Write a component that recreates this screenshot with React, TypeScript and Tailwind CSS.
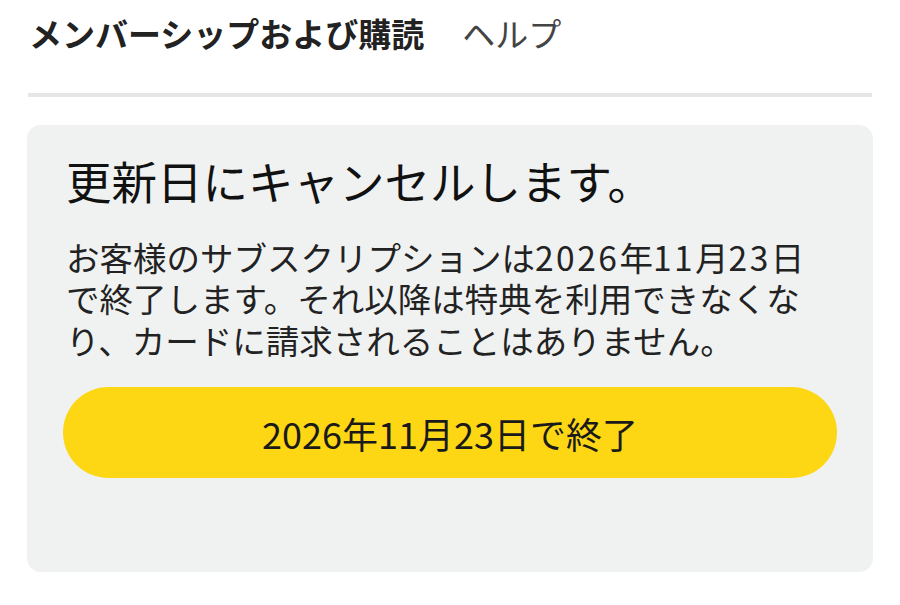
export default function App() {
  const jp = { fontFamily: '"Noto Sans CJK JP", "Noto Sans", sans-serif' };

  return (
    <div className="min-h-screen w-[900px] bg-white px-[27px]" style={jp}>
      {/* tabs */}
      <div className="flex h-[47px] mt-[10px] items-center px-[2px]">
        <span className="text-[33px] font-bold text-[#222222] leading-none">メンバーシップおよび購読</span>
        <span className="ml-[38px] text-[33px] text-[#444444] leading-none">ヘルプ</span>
      </div>
      <div className="mt-[36px] mx-[1px] h-[4px] bg-[#e6e6e6]" />

      {/* cancel card */}
      <div className="mt-[28px] rounded-[14px] bg-[#f0f1f1] px-[36px] pt-[28px] pb-[94px]">
        <h1 className="pl-[3px] text-[45.5px] leading-[1.2] font-normal text-[#111111]">
          更新日にキャンセルします。
        </h1>
        <p className="mt-[28px] pl-[3px] text-[33.5px] leading-[41.5px] text-[#222222]">
          お客様のサブスクリプションは<span className="tracking-[2.5px]">2026</span>年
          <span className="tracking-[2.5px]">11</span>月<span className="tracking-[2.5px]">23</span>日
          <br />
          で終了します。それ以降は特典を利用できなくな
          <br />
          り、カードに請求されることはありません。
        </p>
        <button className="mt-[27px] flex h-[91px] w-full items-center justify-center rounded-full bg-[#fdd714] text-[36px] text-[#1a1a1a]">
          2026年11月23日で終了
        </button>
      </div>
    </div>
  );
}
